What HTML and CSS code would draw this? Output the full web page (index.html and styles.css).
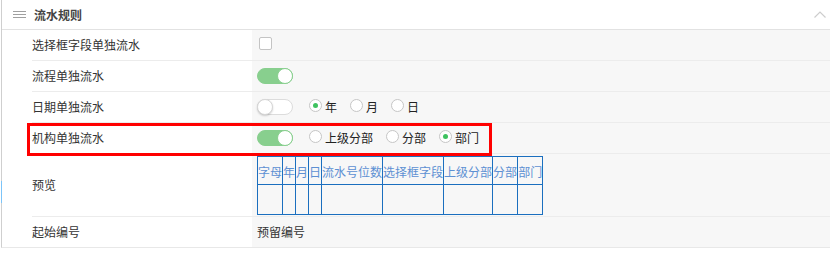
FILE: index.html
```html
<!DOCTYPE html>
<html lang="zh-CN">
<head>
    <meta charset="UTF-8">
    <title>流水规则</title>
    <link rel="stylesheet" href="styles.css">
</head>
<body>
    <div class="panel">
        <div class="panel-head">
            <svg class="menu-icon" width="13" height="7" viewBox="0 0 13 7">
                <path d="M0 0.5H13M0 3.5H13M0 6.5H13" stroke="#a0a0a0" stroke-width="1" fill="none"/>
            </svg>
            <span class="panel-title">流水规则</span>
            <svg class="fold-icon" width="12" height="7" viewBox="0 0 12 7">
                <polyline points="0.5,6.5 6,1 11.5,6.5" stroke="#cdcdcd" stroke-width="1.2" fill="none"/>
            </svg>
        </div>

        <div class="row">
            <div class="row-label">选择框字段单独流水</div>
            <div class="row-value"><span class="checkbox"></span></div>
        </div>

        <div class="row">
            <div class="row-label">流程单独流水</div>
            <div class="row-value"><span class="switch on"><span class="knob"></span></span></div>
        </div>

        <div class="row">
            <div class="row-label">日期单独流水</div>
            <div class="row-value">
                <span class="switch"><span class="knob"></span></span>
                <div class="radio-group">
                    <label class="radio checked"><span class="dot"></span>年</label>
                    <label class="radio"><span class="dot"></span>月</label>
                    <label class="radio"><span class="dot"></span>日</label>
                </div>
            </div>
        </div>

        <div class="row mark">
            <div class="row-label">机构单独流水</div>
            <div class="row-value">
                <span class="switch on"><span class="knob"></span></span>
                <div class="radio-group">
                    <label class="radio"><span class="dot"></span>上级分部</label>
                    <label class="radio"><span class="dot"></span>分部</label>
                    <label class="radio checked"><span class="dot"></span>部门</label>
                </div>
            </div>
        </div>

        <div class="row preview">
            <div class="row-label">预览</div>
            <div class="row-value">
                <table class="preview-table">
                    <tr>
                        <th>字母</th><th>年</th><th>月</th><th>日</th><th>流水号位数</th>
                        <th>选择框字段</th><th>上级分部</th><th>分部</th><th>部门</th>
                    </tr>
                    <tr>
                        <td></td><td></td><td></td><td></td><td></td>
                        <td></td><td></td><td></td><td></td>
                    </tr>
                </table>
            </div>
        </div>

        <div class="row last">
            <div class="row-label">起始编号</div>
            <div class="row-value">预留编号</div>
        </div>
    </div>
</body>
</html>
```

FILE: styles.css
```css
body {
    margin: 0;
    background: #fff;
    font-family: "Noto Sans CJK SC", "Noto Sans", sans-serif;
    font-size: 12px;
    line-height: 16px;
    color: #333;
}

.panel {
    position: relative;
    margin-left: 1px;
    border-left: 1px solid #cfcfcf;
    border-bottom: 1px solid #e8e8e8;
}

/* little blue scroll marker on the left edge */
.panel::before {
    content: "";
    position: absolute;
    left: -1px;
    top: 181px;
    width: 1px;
    height: 22px;
    background: #7cc4f8;
}

.panel-head {
    height: 29px;
    display: flex;
    align-items: center;
    padding: 0 4px 0 11px;
    border-bottom: 1px solid #e2e2e2;
}

.menu-icon {
    margin-right: 8px;
}

.panel-title {
    font-weight: bold;
    color: #444;
    flex: 1;
}

.fold-icon {
    margin-bottom: 1px;
}

.row {
    display: flex;
    height: 30px;
    margin-left: 30px;
    border-bottom: 1px solid #ececec;
}

.row.last {
    border-bottom: none;
}

.row-label {
    width: 220px;
    display: flex;
    align-items: center;
}

.row-value {
    flex: 1;
    display: flex;
    align-items: center;
    padding-left: 5px;
    background: #f7f7f7;
}

.checkbox {
    width: 13px;
    height: 13px;
    margin: 0 0 3px 2px;
    box-sizing: border-box;
    border: 1px solid #c4c4c4;
    border-radius: 2px;
    background: #fff;
}

.switch {
    width: 36px;
    height: 16px;
    box-sizing: border-box;
    display: flex;
    align-items: center;
    border: 1px solid #dcdcdc;
    border-radius: 8px;
    background: #fff;
}

.switch .knob {
    width: 16px;
    height: 16px;
    margin-left: -1px;
    box-sizing: border-box;
    border-radius: 50%;
    background: #fff;
    border: 1px solid #d6d6d6;
    box-shadow: 0 1px 2px rgba(0, 0, 0, 0.18);
}

.switch.on {
    justify-content: flex-end;
    border-color: #88cf8e;
    background: #88cf8e;
}

.switch.on .knob {
    margin: 0 -1px 0 0;
    border-color: #88cf8e;
    box-shadow: none;
}

.radio-group {
    display: flex;
    margin-left: 16px;
}

.radio {
    display: flex;
    align-items: center;
    margin-right: 13px;
    color: #222;
}

.radio .dot {
    width: 13px;
    height: 13px;
    margin: 0 3px 3px 0;
    box-sizing: border-box;
    display: flex;
    align-items: center;
    justify-content: center;
    border: 1px solid #c6c6c6;
    border-radius: 50%;
    background: #fff;
}

.radio.checked .dot::after {
    content: "";
    width: 5px;
    height: 5px;
    border-radius: 50%;
    background: #3ec25f;
}

.row.preview {
    height: 62px;
}

.row.preview .row-value {
    align-items: flex-start;
    padding-top: 2px;
}

.preview-table {
    border-collapse: collapse;
    border: 1px solid #1b6fbf;
}

.preview-table th,
.preview-table td {
    padding: 0;
    border: 1px solid #1b6fbf;
    white-space: nowrap;
}

.preview-table th {
    height: 28px;
    font-weight: normal;
    color: #5d90d3;
    padding-top: 2px;
    box-sizing: border-box;
}

.preview-table td {
    height: 29px;
}

/* red annotation frame around the highlighted row */
.row.mark {
    position: relative;
}

.row.mark::after {
    content: "";
    position: absolute;
    left: -5px;
    top: 0;
    width: 465px;
    height: 33px;
    box-sizing: border-box;
    border: 3px solid #f00;
    pointer-events: none;
}
```
